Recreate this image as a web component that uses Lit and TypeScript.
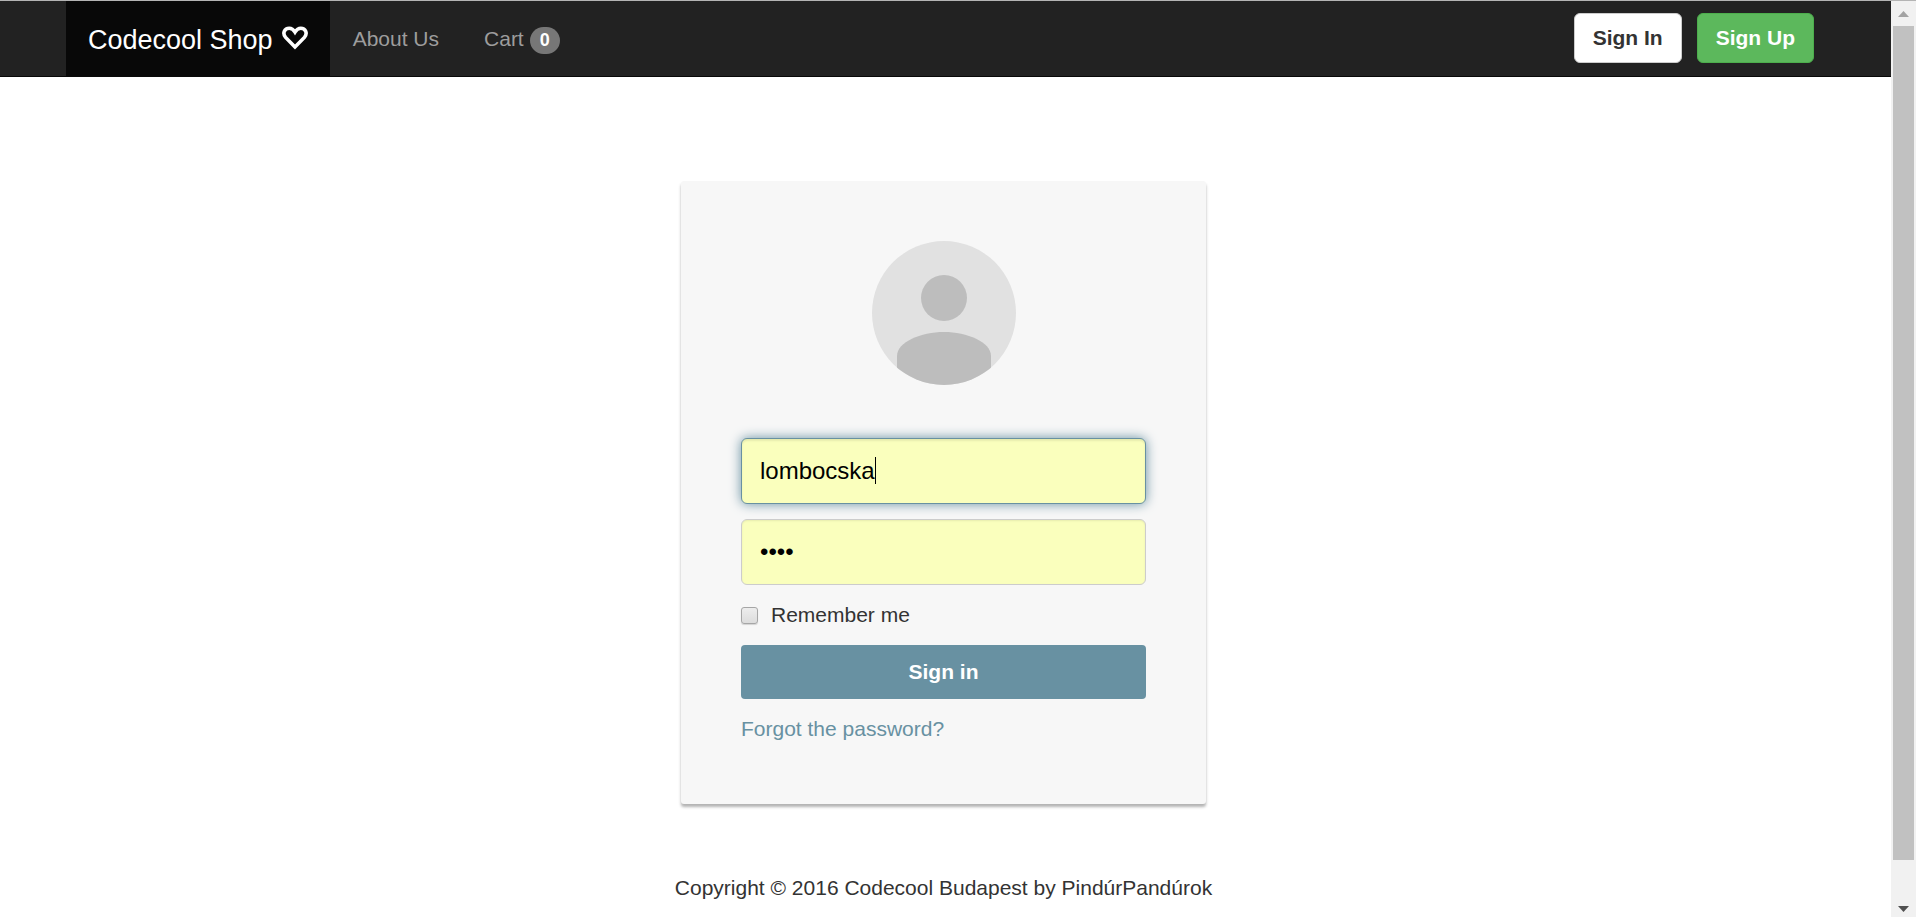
import { LitElement, html, css } from "lit";
import { customElement, property } from "lit/decorators.js";

@customElement("site-header")
class SiteHeader extends LitElement {
  @property({ type: Number }) count = 0;

  static styles = css`
    :host { display: block; }
    .navbar {
      background: #222;
      border-top: 1px solid #b4b4b4;
      border-bottom: 1px solid #080808;
      padding-right: 4px;
    }
    .container {
      display: flex;
      align-items: stretch;
      justify-content: space-between;
      box-sizing: border-box;
      max-width: 1755px;
      height: 75px;
      margin: 0 auto;
      padding-right: 7px;
    }
    .links { display: flex; }
    .links a { text-decoration: none; color: #9d9d9d; display: flex; align-items: center; }
    .links .brand {
      gap: 9px;
      padding: 3px 22px 0 22px;
      background: #080808;
      color: #fff;
      font-size: 27px;
      line-height: 30px;
    }
    .brand svg { width: 26px; height: 24px; margin-bottom: 5px; }
    .links .link { padding: 0 22px 0 23px; gap: 6px; }
    .badge {
      background: #777;
      color: #fff;
      border-radius: 15px;
      padding: 0 10px;
      margin-top: 3px;
      font-size: 18px;
      line-height: 27px;
      font-weight: bold;
    }
    .actions { display: flex; align-items: center; gap: 15px; padding-bottom: 1px; }
    .btn {
      font: bold 21px/30px "Liberation Sans", Arial, sans-serif;
      padding: 9px 18px;
      border-radius: 6px;
      border: 1px solid #ccc;
      background: #fff;
      color: #333;
    }
    .btn.success { background: #5cb85c; border-color: #4cae4c; color: #fff; }
  `;

  render() {
    return html`
      <nav class="navbar">
        <div class="container">
          <div class="links">
            <a class="brand" href="#">
              <span>Codecool Shop</span>
              <svg viewBox="0 0 26 24" aria-hidden="true">
                <path d="M13 21L3.6 11.4C0 7 2.6 2.2 7.2 2.2C10 2.2 11.8 4 13 6C14.2 4 16 2.2 18.8 2.2C23.4 2.2 26 7 22.4 11.4Z"
                  fill="none" stroke="#fff" stroke-width="3.6" stroke-linejoin="miter" />
              </svg>
            </a>
            <a class="link" href="#about">About Us</a>
            <a class="link" href="#cart">Cart <span class="badge">${this.count}</span></a>
          </div>
          <div class="actions">
            <button class="btn" type="button">Sign In</button>
            <button class="btn success" type="button">Sign Up</button>
          </div>
        </div>
      </nav>
    `;
  }
}

@customElement("login-card")
class LoginCard extends LitElement {
  static styles = css`
    :host { display: block; }
    .card {
      box-sizing: border-box;
      max-width: 525px;
      margin: 0 auto;
      padding: 60px;
      background: #f7f7f7;
      border-radius: 3px;
      box-shadow: 0 3px 3px rgba(0, 0, 0, 0.3);
    }
    .avatar { display: block; width: 144px; height: 144px; margin: 0 auto 53px; }
    form { display: flex; flex-direction: column; gap: 15px; margin: 0; }
    .field { position: relative; display: flex; }
    .text {
      box-sizing: border-box;
      width: 100%;
      height: 66px;
      padding: 0 18px;
      font: 24px/30px "Liberation Sans", Arial, sans-serif;
      color: #000;
      background: #faffbd;
      border: 1px solid #ccc;
      border-radius: 6px;
      outline: none;
      box-shadow: inset 0 1px 2px rgba(0, 0, 0, 0.08);
    }
    .text.active {
      border-color: #6891a2;
      box-shadow: inset 0 2px 2px rgba(0, 0, 0, 0.08), 0 0 12px #6891a2;
    }
    .caret { position: absolute; left: 134px; top: 19px; width: 1px; height: 27px; background: #000; }
    .remember { display: flex; align-items: center; gap: 13px; line-height: 30px; }
    .remember input {
      appearance: none;
      box-sizing: border-box;
      width: 17px;
      height: 17px;
      margin: 0;
      border: 1px solid #a6a6a6;
      border-radius: 3px;
      background: linear-gradient(#ededed, #dcdcdc);
      box-shadow: 0 1px 1px rgba(0, 0, 0, 0.15);
    }
    .submit {
      height: 54px;
      padding: 0;
      border: 0;
      border-radius: 4px;
      background: #6891a2;
      color: #fff;
      font: bold 21px/54px "Liberation Sans", Arial, sans-serif;
    }
    .forgot { color: #6891a2; text-decoration: none; line-height: 30px; align-self: flex-start; }
  `;

  render() {
    return html`
      <section class="card">
        <svg class="avatar" viewBox="0 0 144 144" aria-hidden="true">
          <clipPath id="disc"><circle cx="72" cy="72" r="72" /></clipPath>
          <g clip-path="url(#disc)">
            <rect width="144" height="144" fill="#e1e1e1" />
            <circle cx="72" cy="57" r="23" fill="#bdbdbd" />
            <path d="M25 144V115C25 101 49 91 72 91S119 101 119 115V144Z" fill="#bdbdbd" />
          </g>
        </svg>
        <form @submit=${(e: Event) => e.preventDefault()}>
          <div class="field">
            <input class="text active" type="text" aria-label="Username" .value=${"lombocska"} />
            <span class="caret"></span>
          </div>
          <div class="field">
            <input class="text" type="password" aria-label="Password" .value=${"1234"} />
          </div>
          <label class="remember"><input type="checkbox" />Remember me</label>
          <button class="submit" type="submit">Sign in</button>
          <a class="forgot" href="#forgot">Forgot the password?</a>
        </form>
      </section>
    `;
  }
}

@customElement("app-root")
class AppRoot extends LitElement {
  static styles = css`
    :host {
      display: grid;
      grid-template-columns: minmax(0, 1fr) 25px;
      min-height: 100vh;
      background: #fff;
      color: #333;
      font: 21px/30px "Liberation Sans", Arial, sans-serif;
    }
    main { padding: 104px 4px 0 0; }
    footer { padding: 69px 4px 0 0; text-align: center; }
    .scrollbar {
      display: flex;
      flex-direction: column;
      align-items: center;
      background: #f1f1f1;
      border-top: 1px solid #b4b4b4;
    }
    .arrow { display: block; width: 11px; height: 6px; margin: 10px 0 9px; }
    .arrow.down { margin: 0 0 5px; }
    .track { flex: 1; align-self: stretch; padding: 0 2px; display: flex; flex-direction: column; }
    .thumb { flex: 834; background: #c1c1c1; }
    .rest { flex: 46; }
  `;

  render() {
    return html`
      <div>
        <site-header .count=${0}></site-header>
        <main><login-card></login-card></main>
        <footer>Copyright © 2016 Codecool Budapest by PindúrPandúrok</footer>
      </div>
      <div class="scrollbar" aria-hidden="true">
        <svg class="arrow" viewBox="0 0 11 6"><path d="M0 6L5.5 0L11 6Z" fill="#a3a3a3" /></svg>
        <div class="track"><div class="thumb"></div><div class="rest"></div></div>
        <svg class="arrow down" viewBox="0 0 11 6"><path d="M0 0L5.5 6L11 0Z" fill="#505050" /></svg>
      </div>
    `;
  }
}
